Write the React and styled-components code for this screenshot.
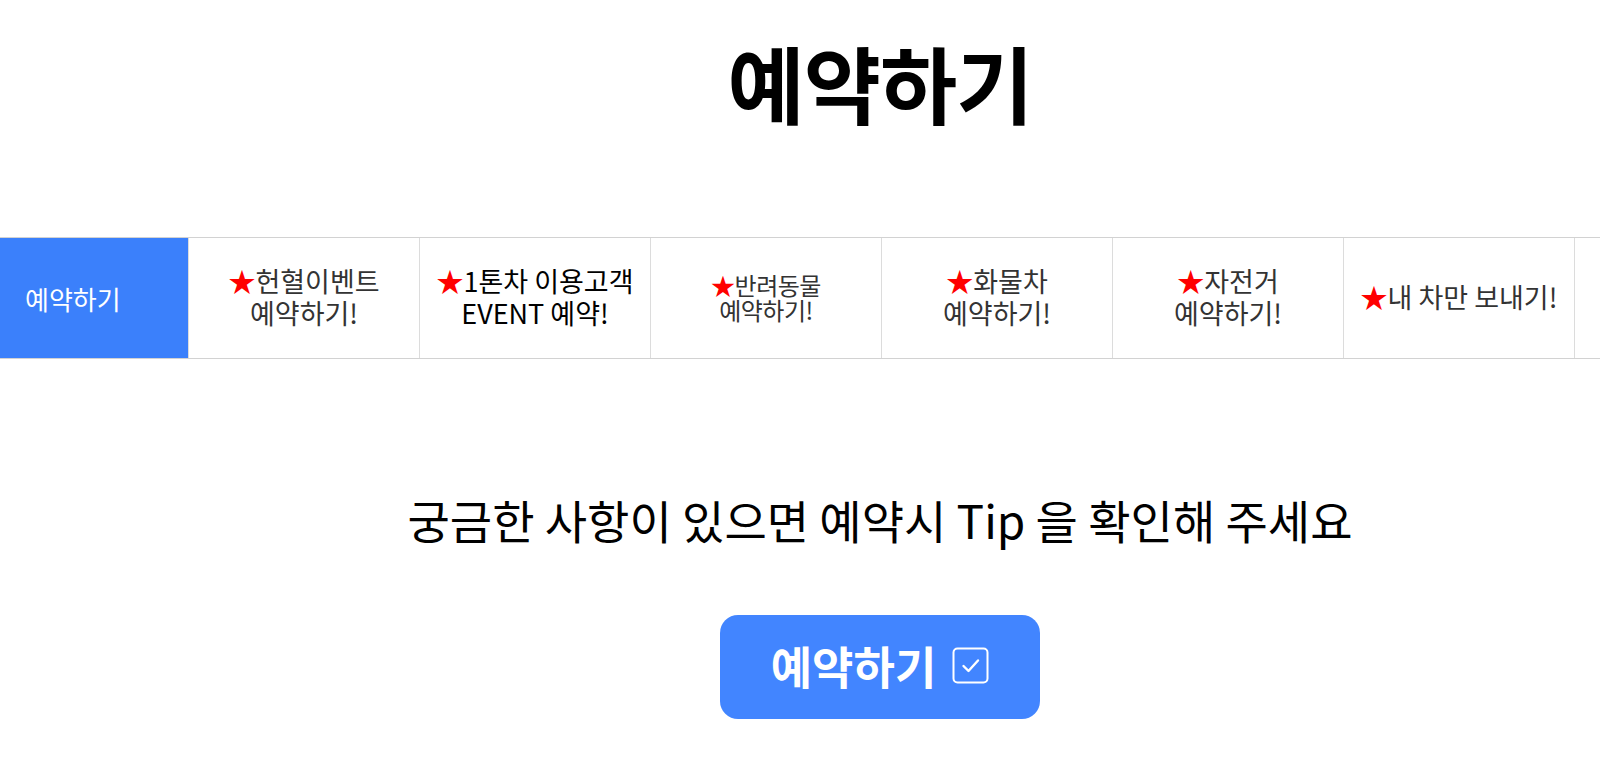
import React from "react";
import styled, { createGlobalStyle } from "styled-components";

const GlobalStyle = createGlobalStyle`
  html, body {
    margin: 0;
    padding: 0;
    background: #fff;
    overflow: hidden;
  }
  body {
    font-family: "Noto Sans CJK KR", "Noto Sans", sans-serif;
    color: #000;
  }
`;

const tabs = [
  { lines: ["헌혈이벤트", "예약하기!"] },
  { lines: ["1톤차 이용고객", "EVENT 예약!"], dark: true },
  { lines: ["반려동물", "예약하기!"], small: true },
  { lines: ["화물차", "예약하기!"] },
  { lines: ["자전거", "예약하기!"] },
  { lines: ["내 차만 보내기!"] },
  { lines: [""] },
];

const App = () => {
  return (
    <Page>
      <GlobalStyle />
      <Center>
        <Title>예약하기</Title>
      </Center>
      <TabBar>
        <ActiveTab>예약하기</ActiveTab>
        {tabs.map((tab, i) => (
          <Tab key={i} $dark={tab.dark} $small={tab.small}>
            {tab.lines.map((line, j) => (
              <span key={j}>
                {j === 0 && line && <Star>★</Star>}
                {line}
              </span>
            ))}
          </Tab>
        ))}
      </TabBar>
      <Center>
        <Tip>궁금한 사항이 있으면 예약시 Tip 을 확인해 주세요</Tip>
        <ReserveButton>
          예약하기
          <svg width="37" height="37" viewBox="0 0 37 37" fill="none">
            <rect x="1.5" y="1.5" width="34" height="34" rx="4" stroke="#fff" strokeWidth="2" />
            <path d="M11.5 19l5 5 9.5-10.5" stroke="#fff" strokeWidth="2.4" strokeLinecap="round" strokeLinejoin="round" />
          </svg>
        </ReserveButton>
      </Center>
    </Page>
  );
};

const Page = styled.div`
  width: 1600px;
  height: 763px;
  overflow: hidden;
`;

const Center = styled.div`
  width: 1760px;
  display: flex;
  flex-direction: column;
  align-items: center;
`;

const Title = styled.h1`
  margin: 22px 0 0;
  font-size: 84px;
  font-weight: 700;
  line-height: 120px;
  letter-spacing: -1px;
`;

const TabBar = styled.nav`
  margin-top: 95px;
  display: flex;
  width: 1900px;
  height: 120px;
  border-top: 1px solid #d2d2d2;
  border-bottom: 1px solid #d2d2d2;
`;

const ActiveTab = styled.div`
  flex: 0 0 188px;
  box-sizing: border-box;
  padding-left: 25px;
  display: flex;
  align-items: center;
  background: #3b80fb;
  color: #fff;
  font-size: 26px;
`;

const Tab = styled.div`
  flex: 0 0 231px;
  box-sizing: border-box;
  border-left: 1px solid #dcdcdc;
  display: flex;
  flex-direction: column;
  align-items: center;
  justify-content: center;
  text-align: center;
  color: ${(p) => (p.$dark ? "#000" : "#333")};
  font-size: ${(p) => (p.$small ? "24px" : "27px")};
  line-height: ${(p) => (p.$small ? "25px" : "32px")};
  letter-spacing: ${(p) => (p.$small ? "-0.5px" : "0")};
  padding-bottom: 2px;
`;

const Star = styled.span`
  color: #ff0000;
`;

const Tip = styled.p`
  margin: 130px 0 0;
  font-size: 46px;
  line-height: 60px;
  font-weight: 400;
`;

const ReserveButton = styled.button`
  margin-top: 66px;
  width: 320px;
  height: 104px;
  border: none;
  border-radius: 18px;
  background: #4285ff;
  color: #fff;
  font-family: inherit;
  font-size: 45px;
  font-weight: 700;
  display: flex;
  align-items: center;
  justify-content: center;
  gap: 16px;
  padding: 0 0 4px;
`;

export default App;
